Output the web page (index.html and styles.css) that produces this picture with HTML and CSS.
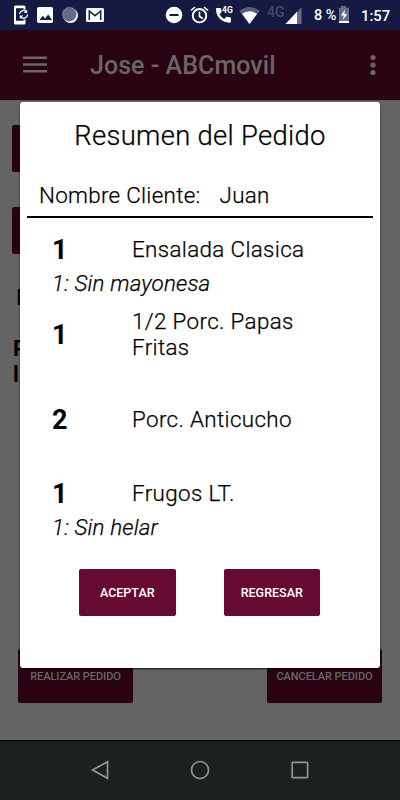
FILE: index.html
```html
<!DOCTYPE html>
<html lang="es">
<head>
<meta charset="utf-8">
<meta name="viewport" content="width=device-width, initial-scale=1">
<title>Resumen del Pedido</title>
<link rel="stylesheet" href="styles.css">
</head>
<body>
<div class="phone">
  <div class="status">
    <svg class="status-icons" width="400" height="30" viewBox="0 0 400 30" aria-hidden="true">
      <g fill="#fff">
        <path fill-rule="evenodd" d="M15.5 5.500h8.500q1.500 0 1.500 1.500v2.500h-2v-1.200h-7.500v12.500h7.500v-1.300h2v3.500q0 1.500-1.500 1.500h-8.500q-1.500 0-1.500-1.500v-16q0-1.500 1.500-1.500z"/>
        <path d="M19.500 14a4 4 0 0 1 6.500-2.600M27.600 14.500a4 4 0 0 1-6.600 2.700" fill="none" stroke="#fff" stroke-width="1.300"/>
        <path d="M27.200 9.500v3.500h-3.500zM19.800 19v-3.500h3.500z"/>
        <rect x="37" y="7" width="16" height="16" rx="1.800"/>
        <path d="M39.500 20l3.200-4.200 2.300 2.700 3.200-4 3.800 5.500z" fill="#141a42"/>
        <circle cx="70.500" cy="15.500" r="7.500"/>
        <circle cx="69.300" cy="14.300" r="7" fill="#65698a" stroke="#8d90a7" stroke-dasharray="1.200 1"/>
        <rect x="86" y="8" width="18" height="14" rx="1.500"/>
        <path d="M89.300 20v-9l5.700 4.700 5.700-4.700v9" fill="none" stroke="#141a42" stroke-width="1.500"/>
        <circle cx="174" cy="15" r="8.300"/>
        <path d="M169.500 14h9v2h-9z" fill="#141a42"/>
        <circle cx="199.500" cy="15.700" r="6.700" fill="none" stroke="#fff" stroke-width="1.900"/>
        <path d="M199.500 11.500v5l3.300 2M191 10.500l4-3.500M208 10.500l-4-3.500" fill="none" stroke="#fff" stroke-width="1.600"/>
        <path d="M217 8h3.200q.6 0 .8.800l.7 3.200-2.200 2.200q1.700 3.200 4.700 4.700l2.200-2.200 3.500.6q1 .2 1 .9v3.300q0 1.200-1.200 1.200c-8 0-13.700-5.800-13.700-13.600q0-1.100 1-1.100z"/>
        <path d="M239.200 10.800Q249.500 3.200 259.800 10.800L249.500 24z" fill="#5a5e7c"/>
        <path d="M242 13.800q7.500-5 15 0l-7.500 10.200z"/>
        <path d="M301.500 7.500V24H285.500z" fill="#686c87"/>
        <path d="M297 11.800V24H285.500z"/>
        <path d="M341 6h5v1.700h3V23h-10V7.700h2z" fill="#686c87"/>
        <path d="M339 21h10v2h-10zM345 9.500l-4 6h2.800l-.8 4.500 4.200-6h-2.900z"/>
      </g>
    </svg>
    <span class="st call">4G</span>
    <span class="st net">4G</span>
    <span class="st pct">8 %</span>
    <span class="st time">1:57</span>
  </div>
  <header class="bar">
    <svg class="menu" width="24" height="18" viewBox="0 0 24 18" fill="#6a6666"><path d="M0 .5h24V3H0zM0 7.200h24v2.500H0zM0 14h24v2.500H0z"/></svg>
    <h1>Jose - ABCmovil</h1>
    <svg class="more" width="6" height="22" viewBox="0 0 6 22" fill="#6a6666"><circle cx="3" cy="3.500" r="2.600"/><circle cx="3" cy="11" r="2.600"/><circle cx="3" cy="18.500" r="2.600"/></svg>
  </header>
  <main class="page">
    <div class="back-btn first"></div>
    <div class="back-btn second"></div>
    <p class="table">M</p>
    <p class="orders">P<br>l</p>
    <div class="page-actions">
      <div class="dim-btn">REALIZAR PEDIDO</div>
      <div class="dim-btn">CANCELAR PEDIDO</div>
    </div>
  </main>
  <nav class="nav">
    <svg width="20" height="20" viewBox="0 0 20 20"><path d="M2.500 10L17.500 1.700v16.600z"/></svg>
    <svg width="20" height="20" viewBox="0 0 20 20"><circle cx="10" cy="10" r="8.500"/></svg>
    <svg width="20" height="20" viewBox="0 0 20 20"><rect x="2.200" y="2.300" width="15.400" height="15.400" rx=".6"/></svg>
  </nav>
  <section class="dialog" role="dialog">
    <h2><span>Resumen del Pedido</span></h2>
    <div class="client"><span class="label">Nombre Cliente:</span><span class="name">Juan</span></div>
    <div class="row r1"><b>1</b><span>Ensalada Clasica</span></div>
    <p class="note">1: Sin mayonesa</p>
    <div class="row r2"><b>1</b><span>1/2 Porc. Papas<br>Fritas</span></div>
    <div class="row r3"><b>2</b><span>Porc. Anticucho</span></div>
    <div class="row r4"><b>1</b><span>Frugos LT.</span></div>
    <p class="note helar">1: Sin helar</p>
    <div class="actions"><button>ACEPTAR</button><button>REGRESAR</button></div>
  </section>
</div>
</body>
</html>
```
FILE: styles.css
```css
* { box-sizing: border-box; }
body, h1, h2, p { margin: 0; }
body { font-family: Roboto, "Liberation Sans", sans-serif; color: #000; }
.phone { position: relative; width: 400px; height: 800px; overflow: hidden; display: grid; grid-template-rows: 30px 70px 640px 60px; background: #646464; }
.status { position: relative; background: #141a42; color: #fff; }
.status-icons { display: block; }
.st { position: absolute; line-height: 16px; white-space: nowrap; font-weight: 500; }
.call { left: 222px; top: 2px; font-size: 8.500px; font-weight: 700; }
.net { left: 267px; top: 4px; font-size: 14px; color: #464a69; }
.pct { left: 314px; top: 8px; font-size: 14.500px; }
.time { left: 361px; top: 8px; font-size: 14.800px; }
.bar { display: flex; align-items: center; background: #2a0313; color: #6a6666; padding: 2px 24px 0 23px; }
.bar h1 { font-size: 25px; font-weight: 500; line-height: 30px; margin: 0 0 0 43px; letter-spacing: .05px; }
.menu { margin-top: -2px; }
.more { margin: -2px 0 0 auto; }
.page { display: flex; flex-direction: column; border-top: 1px solid #555; padding-left: 12px; }
.back-btn { width: 115px; height: 47px; border-radius: 2px; background: #2a0313; }
.first { margin-top: 24px; }
.second { margin-top: 35px; }
.table { font-size: 22px; line-height: 26px; margin: 31px 0 0 4px; }
.orders { font-size: 22px; line-height: 26px; font-weight: 700; margin: 25px 0 0 1px; }
.page-actions { display: flex; justify-content: space-between; margin: auto 18px 37px 6px; }
.dim-btn { width: 115px; height: 54px; padding-top: 21px; border-radius: 2px; background: #2a0313; color: #6a6666; font-size: 11px; line-height: 14px; font-weight: 500; text-align: center; white-space: nowrap; letter-spacing: -.05px; }
.nav { background: #1c2020; border-top: 1px solid #000; display: flex; justify-content: center; align-items: center; gap: 80px; padding: 0 1px 2px 0; }
.nav svg { fill: none; stroke: #929494; stroke-width: 1.700; }
.dialog { position: absolute; left: 20px; top: 102px; width: 360px; height: 566px; border-radius: 3px; background: #fff; box-shadow: 0 1px 2px rgba(0,0,0,.75); font-size: 22.400px; font-weight: 300; line-height: 26px; letter-spacing: .35px; -webkit-text-stroke: .25px #000; }
.dialog h2 { font-size: 27.400px; font-weight: 300; line-height: 32px; padding-top: 18px; text-align: center; letter-spacing: .32px; }
.client { display: flex; margin: 26px 7px 0; height: 40px; padding: 4px 0 0 12px; border-bottom: 2px solid #000; letter-spacing: .3px; }
.name { margin-left: 19px; }
.row { display: flex; align-items: center; padding-left: 32px; }
.row b { width: 80px; font-size: 27px; font-weight: 700; -webkit-text-stroke: 0; }
.row span { margin-bottom: 2px; }
.r1 { height: 48px; padding-top: 16px; margin-bottom: 4px; }
.note { font-style: italic; padding-left: 32px; letter-spacing: .15px; }
.r2 { height: 52px; margin-top: 13px; }
.r3 { height: 30px; margin-top: 44px; }
.r4 { height: 30px; margin-top: 44px; }
.helar { margin-top: 5px; }
.actions { display: flex; gap: 48px; padding: 29px 0 0 59px; }
.actions button { width: 96.500px; height: 47px; padding: 0; border: 0; border-radius: 2px; background: #670a31; color: #fff; font: 500 12.500px Roboto, sans-serif; -webkit-text-stroke: 0; }
```
